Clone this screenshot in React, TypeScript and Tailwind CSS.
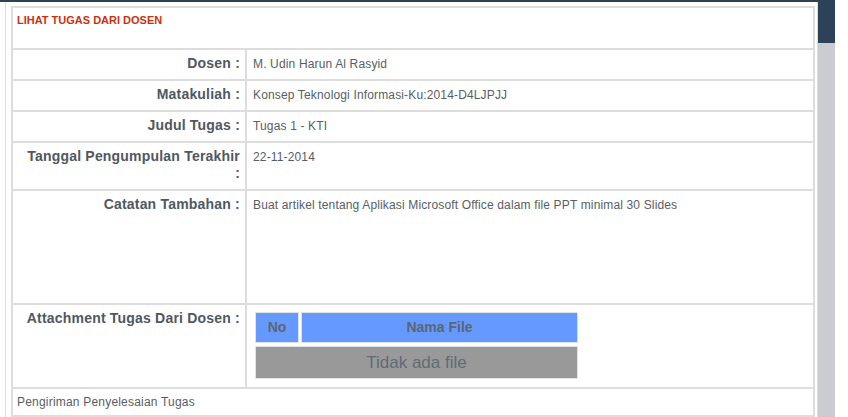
import React from "react";

const Label = ({ children }: { children: React.ReactNode }) => (
  <div className="w-[234px] shrink-0 border-r-2 border-[#dddddd] pl-[10px] pr-[5px] pt-[5px] text-right text-[14px] font-bold leading-[17px] tracking-[0.2px] text-[#4f5861]">
    {children}
  </div>
);

const Value = ({ children }: { children?: React.ReactNode }) => (
  <div className="flex-1 pl-[6px] pt-[6px] text-[12px] leading-[16px] tracking-[0.15px] text-[#585d63]">
    {children}
  </div>
);

const Row = ({ h, label, children }: { h: string; label: React.ReactNode; children?: React.ReactNode }) => (
  <div className={`flex border-t-2 border-[#dddddd] ${h}`}>
    <Label>{label}</Label>
    <Value>{children}</Value>
  </div>
);

export default function App() {
  return (
    <div className="flex h-[417px] w-[848px] overflow-hidden bg-white font-['Liberation_Sans',Arial,sans-serif]">
      <div className="flex w-[818px] shrink-0 flex-col border-t-2 border-[#2c4257] pl-[5px]">
        <div className="flex-1 border-x border-[#dddddd] bg-white pl-[5px] pt-[4px]">
          <div className="w-[804px] border-2 border-[#dddddd]">
            <div className="h-[40px] pl-[4px] pt-[6px] text-[11px] font-bold leading-[13px] text-[#c8320f]">
              LIHAT TUGAS DARI DOSEN
            </div>
            <Row h="h-[31px]" label="Dosen :">M. Udin Harun Al Rasyid</Row>
            <Row h="h-[31px]" label="Matakuliah :">Konsep Teknologi Informasi-Ku:2014-D4LJPJJ</Row>
            <Row h="h-[31px]" label="Judul Tugas :">Tugas 1 - KTI</Row>
            <Row h="h-[48px]" label="Tanggal Pengumpulan Terakhir :">22-11-2014</Row>
            <Row h="h-[114px]" label="Catatan Tambahan :">
              Buat artikel tentang Aplikasi Microsoft Office dalam file PPT minimal 30 Slides
            </Row>
            <div className="flex h-[84px] border-t-2 border-[#dddddd]">
              <Label>Attachment Tugas Dari Dosen :</Label>
              <div className="flex-1 pl-[8px] pt-[7px]">
                <div className="flex w-[323px] flex-col gap-[3px]">
                  <div className="flex gap-[2px]">
                    <div className="flex h-[31px] w-[44px] items-center justify-center border border-[#e2e2e2] bg-[#6699ff] text-[14px] font-bold text-[#5b6670]">
                      No
                    </div>
                    <div className="flex h-[31px] flex-1 items-center justify-center border border-[#e2e2e2] bg-[#6699ff] text-[14px] font-bold text-[#5b6670]">
                      Nama File
                    </div>
                  </div>
                  <div className="flex h-[33px] items-center justify-center border border-[#e2e2e2] bg-[#999999] text-[17px] text-[#5f6b75]">
                    Tidak ada file
                  </div>
                </div>
              </div>
            </div>
            <div className="h-[30px] border-y-2 border-[#dddddd] pl-[4px] pt-[6px] text-[12px] leading-[14px] tracking-[0.2px] text-[#585d63]">
              Pengiriman Penyelesaian Tugas
            </div>
          </div>
        </div>
      </div>
      <div className="flex w-[17px] shrink-0 flex-col">
        <div className="h-[43px] bg-[#2c4257]" />
        <div className="flex-1 bg-[#c9cdd1]" />
      </div>
      <div className="flex-1 bg-white" />
    </div>
  );
}
